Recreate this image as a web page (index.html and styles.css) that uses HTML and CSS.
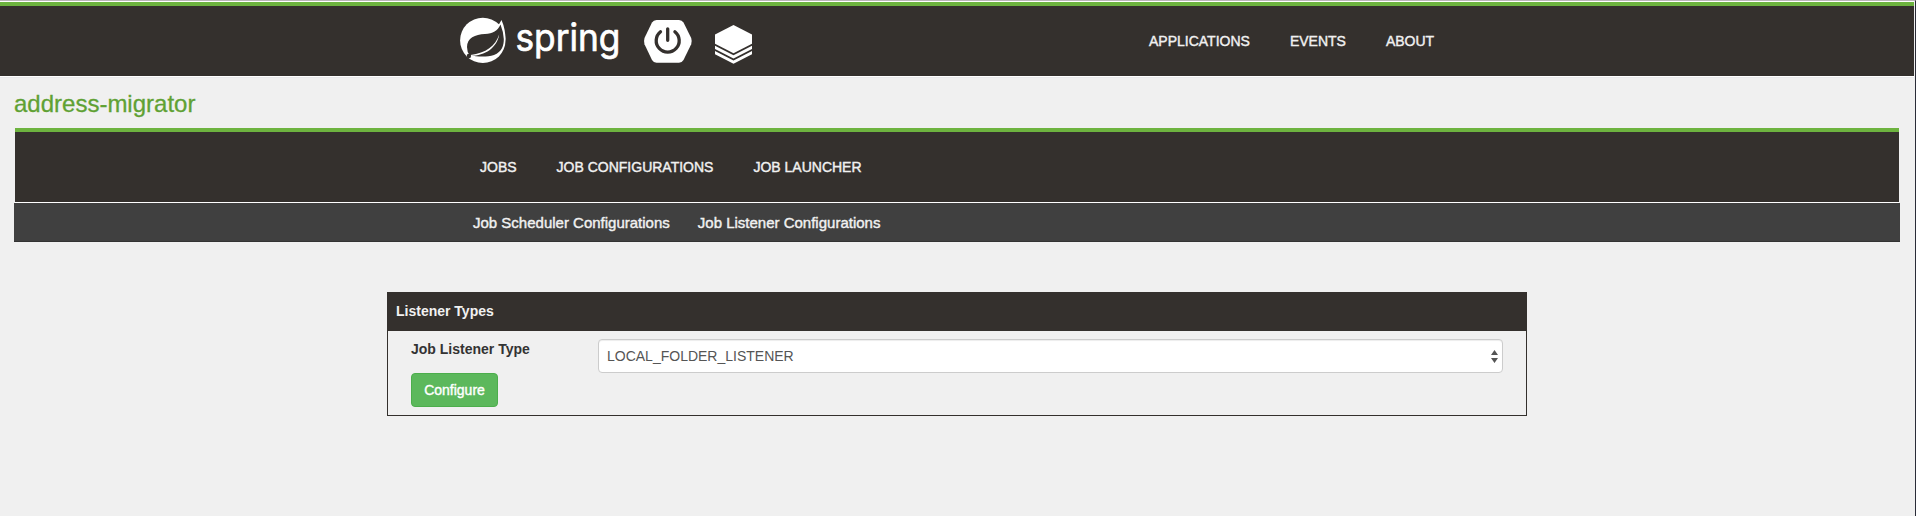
FILE: index.html
```html
<!DOCTYPE html>
<html lang="en">
<head>
<meta charset="utf-8">
<title>address-migrator</title>
<link rel="stylesheet" href="styles.css">
</head>
<body>
<div class="page">
  <header class="topbar">
    <div class="brand">
      <svg class="logo" viewBox="0 0 320 70" role="img" aria-label="Spring">
        <circle class="fill" cx="22.800" cy="34.400" r="22.700"/>
        <path class="fill" d="M36 20.500Q40 18 41.500 14Q45.500 23 45.500 34z"/>
        <path class="dark" d="M40.500 18.500C37.500 25 33 27.500 25 28C15 28.500 7 32 7 41Q7 46 9.500 49C18 51 27 51 34 49C42 46 44 39 43.800 33Q43.500 26 40.500 18.500Z"/>
        <path class="fill" d="M39.200 28.500C35.500 40 26 47 10.500 49L10.800 50C25 49.500 37 42 39.200 28.500Z"/>
        <circle class="dark" cx="8.900" cy="50" r="2.200"/>
        <text class="word" x="55.500" y="44.500" textLength="105" lengthAdjust="spacingAndGlyphs">spring</text>
        <path class="fill" d="M196.500 14h22.500q3 0 4.500 2.500l7.700 15.500q1 3.300 0 6.300l-7.700 15.700q-1.500 2.700-4.500 2.700h-22.500q-3 0-4.500-2.700l-7.500-15.700q-1-3 0-6.300l7.500-15.500q1.500-2.500 4.500-2.500z"/>
        <path class="power" d="M200.500 25.700a11.500 11.500 0 1 0 14.400 0M207.700 22.800v11.500"/>
        <path class="fill" d="M255 28.500l18.500-9.500L292 28.500v9.200l-18.500 9.500L255 37.700z"/>
        <path class="fill" d="M255 39.700l18.500 9.500L292 39.700v3.300l-18.500 9.500L255 43z"/>
        <path class="fill" d="M255 45l18.500 9.500L292 45v3.300l-18.500 9.500L255 48.300z"/>
      </svg>
    </div>
    <nav class="nav">
      <a>APPLICATIONS</a><a>EVENTS</a><a>ABOUT</a>
    </nav>
  </header>
  <h1 class="title">address-migrator</h1>
  <nav class="jobbar"><a>JOBS</a><a>JOB CONFIGURATIONS</a><a>JOB LAUNCHER</a></nav>
  <nav class="subbar"><a>Job Scheduler Configurations</a><a>Job Listener Configurations</a></nav>
  <section class="panel">
    <h2 class="panel-head">Listener Types</h2>
    <div class="panel-body">
      <div class="row">
        <label class="label">Job Listener Type</label>
        <div class="select"><span class="value">LOCAL_FOLDER_LISTENER</span>
          <svg class="arrows" viewBox="0 0 7 13"><path d="M3.500 0L7 5H0zM0 8h7l-3.500 5z"/></svg>
        </div>
      </div>
      <button class="button">Configure</button>
    </div>
  </section>
</div>
</body>
</html>
```
FILE: styles.css
```css
* { box-sizing: border-box; }
body {
  margin: 0;
  height: 516px;
  background: #f0f0f0;
  font: 14px/20px "Liberation Sans", Arial, sans-serif;
}
.page {
  height: 516px;
  border-top: 1px solid #b9b5b8;
  border-right: 1px solid #2a2c38;
}
.topbar {
  display: flex;
  height: 76px;
  margin-right: 1px;
  border-top: 1px solid #fff;
  border-bottom: 1px solid #fff;
  background: linear-gradient(#6db33f 4px, #34302d 4px);
  box-shadow: 0 1px 0 #e9e9ec;
}
.brand { width: 689px; margin-left: 460px; }
.logo { display: block; width: 320px; height: 70px; margin-top: 4px; }
.fill { fill: #fff; }
.dark { fill: #34302d; }
.word {
  fill: #fff;
  stroke: #fff;
  stroke-width: 0.7;
  stroke-linejoin: round;
  font: 400 37.5px Inter, sans-serif;
}
.power { fill: none; stroke: #34302d; stroke-width: 3.300; stroke-linecap: round; }
.nav { display: flex; gap: 40px; padding-top: 29px; }
.nav a, .jobbar a, .subbar a {
  color: #f1f1f1;
  -webkit-text-stroke: 0.4px #f1f1f1;
  white-space: nowrap;
}
.title {
  margin: 12px 0 10px 14px;
  color: #5fa134;
  font-size: 24px;
  font-weight: 400;
  line-height: 29px;
  -webkit-text-stroke: 0.3px #5fa134;
}
.jobbar {
  display: flex;
  gap: 40px;
  height: 74px;
  margin: 0 16px 1px 15px;
  padding: 25px 0 0 465px;
  border-top: 4px solid #6db33f;
  background: #34302d;
  box-shadow: 0 1px 0 #fff;
}
.subbar {
  display: flex;
  gap: 28px;
  height: 39px;
  margin: 0 15px 0 14px;
  padding: 10px 0 0 459px;
  border-bottom: 1px solid #333;
  background: #404040;
  font-size: 15px;
}
.panel {
  width: 1140px;
  height: 124px;
  margin: 50px 0 0 387px;
  border: 1px solid #34302d;
}
.panel-head {
  height: 38px;
  margin: 0;
  padding: 8px;
  background: #34302d;
  color: #f1f1f1;
  font-size: 14px;
  line-height: 20px;
}
.panel-body { padding: 8px 23px; }
.row { display: flex; height: 34px; }
.label { width: 187px; color: #333; font-weight: 700; }
.select {
  display: flex;
  justify-content: space-between;
  align-items: center;
  width: 905px;
  height: 34px;
  padding: 0 4px 0 8px;
  border: 1px solid #ccc;
  border-radius: 4px;
  background: #fff;
  box-shadow: inset 0 1px 1px rgba(0, 0, 0, .075);
  color: #555;
}
.arrows { width: 7px; height: 13px; fill: #555; }
.button {
  display: block;
  width: 87px;
  height: 34px;
  padding: 0;
  border: 1px solid #4cae4c;
  border-radius: 4px;
  background: #5cb85c;
  color: #fff;
  font: 14px/20px "Liberation Sans", Arial, sans-serif;
  -webkit-text-stroke: 0.4px #fff;
}
```
